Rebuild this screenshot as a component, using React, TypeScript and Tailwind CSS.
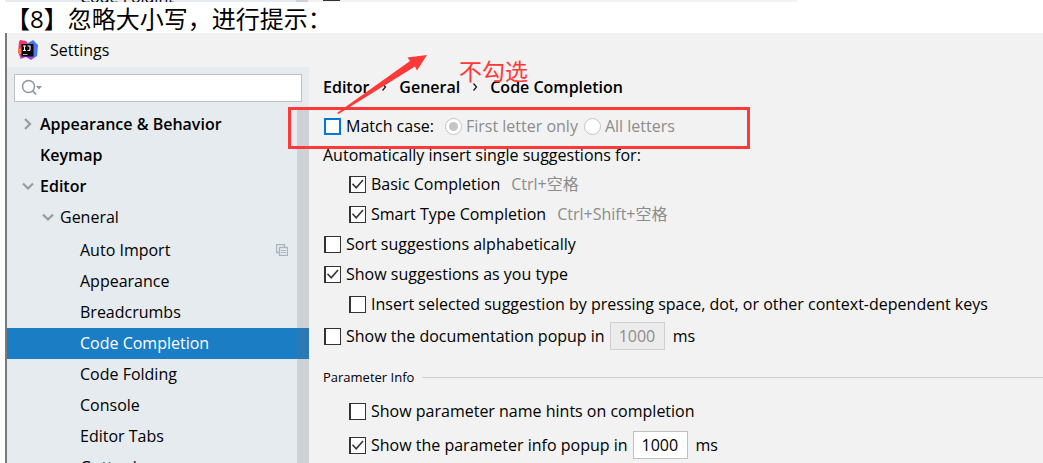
import { useState, type ReactNode } from "react";

function CheckBox({ id, checked = false, focused = false }: { id: string; checked?: boolean; focused?: boolean }) {
  const [on, setOn] = useState(checked);
  return (
    <span className="grid size-[17px] shrink-0">
      <input
        id={id}
        type="checkbox"
        checked={on}
        onChange={(e) => setOn(e.target.checked)}
        className={
          focused
            ? "col-start-1 row-start-1 size-[17px] appearance-none border-2 border-[#0078d7] bg-white"
            : "col-start-1 row-start-1 size-[17px] appearance-none border border-l-2 border-[#333333] bg-white"
        }
      />
      {on && (
        <svg viewBox="0 0 17 17" className="pointer-events-none col-start-1 row-start-1 size-[17px]" fill="none" stroke="#333" strokeWidth="1.6">
          <path d="M3.5 7.8 L7.2 11.8 L14 4" />
        </svg>
      )}
    </span>
  );
}

function Option({
  id,
  label,
  checked,
  focused,
  nested,
  children,
}: {
  id: string;
  label: string;
  checked?: boolean;
  focused?: boolean;
  nested?: boolean;
  children?: ReactNode;
}) {
  return (
    <div className={nested ? "flex h-[30px] items-center gap-[5px] pl-[25px]" : "flex h-[30px] items-center gap-[5px]"}>
      <CheckBox id={id} checked={checked} focused={focused} />
      <label htmlFor={id}>{label}</label>
      {children}
    </div>
  );
}

function Radio({ label, checked }: { label: string; checked?: boolean }) {
  return (
    <label className="flex items-center gap-1 text-[#8c8c8c]">
      <span className="grid size-[17px] place-items-center">
        <input
          type="radio"
          name="match-scope"
          disabled
          defaultChecked={checked}
          className="peer col-start-1 row-start-1 size-[17px] appearance-none rounded-full border border-[#c4c4c4] bg-white"
        />
        <span className="col-start-1 row-start-1 hidden size-[9px] rounded-full bg-[#c4c4c4] peer-checked:block" />
      </span>
      {label}
    </label>
  );
}

function Chevron({ open }: { open?: boolean }) {
  return (
    <svg viewBox="0 0 12 12" className="size-3" fill="none" stroke="#989c9f" strokeWidth="2.2">
      <path d={open ? "M1 3.5 L6 8.5 L11 3.5" : "M3 1 L8 6 L3 11"} />
    </svg>
  );
}

function CrumbArrow() {
  return (
    <svg viewBox="0 0 6 8" className="h-2 w-[6px]" fill="none" stroke="#111" strokeWidth="1.2">
      <path d="M1.5 0.5 L4.5 4 L1.5 7.5" />
    </svg>
  );
}

function CopyIcon() {
  return (
    <svg viewBox="0 0 12 12" className="size-3" fill="none" stroke="#a9b4bb">
      <path d="M3 8.500 H0.500 V0.500 H8.500 V3" strokeWidth="1.300" />
      <rect x="3.500" y="3.500" width="8" height="8" strokeWidth="1.300" />
      <path d="M5 6.500 H10 M5 8.500 H10" />
    </svg>
  );
}

function Logo() {
  return (
    <svg viewBox="0 0 20 20" className="size-5">
      <path d="M1 2 L2 0 L8 1 L11 5 L6 16 L2 17 L0 12 Z" fill="#f3356b" />
      <path d="M0 9 L5 8 L6 14 L1 14 Z" fill="#fc8a2c" />
      <path d="M10 3 L15 0 L20 5 L19 16 L16 18 L8 16 Z" fill="#4a78f2" />
      <path d="M2 19 L3 13 L12 14 L16 18 L13 20 L8 17 Z" fill="#a344dc" />
      <rect x="3.500" y="4" width="12" height="12.500" fill="#08060a" />
      <path d="M5 6 H8 M6.500 6 V10.500 M5 10.500 H8 M9.500 6 H12.500 M12 6 V9.500 Q12 10.500 10.500 10.500 H9.500" stroke="#fff" strokeWidth="1.100" fill="none" />
      <path d="M5 14.500 H9.500" stroke="#aaa" />
    </svg>
  );
}

const pages = [
  "Auto Import",
  "Appearance",
  "Breadcrumbs",
  "Code Completion",
  "Code Folding",
  "Console",
  "Editor Tabs",
  "Gutter Icons",
];

function Sidebar() {
  return (
    <nav className="flex w-[302px] shrink-0 flex-col bg-[#e6ebef]">
      <div className="p-[7px]">
        <label className="flex h-7 items-center border border-[#bfc1c3] bg-white pl-[6px]">
          <svg viewBox="0 0 22 18" className="h-[18px] w-[22px]" fill="none" stroke="#8f979d">
            <circle cx="7.500" cy="7.500" r="6" strokeWidth="1.500" />
            <path d="M11.500 11.500 L15 15.500" strokeWidth="1.800" />
            <path d="M15 7 H21 L18 10.500 Z" fill="#8f979d" stroke="none" />
          </svg>
          <input type="text" aria-label="Search settings" className="min-w-0 flex-1 outline-none" />
        </label>
      </div>
      <div className="grid flex-1">
        <ul className="col-start-1 row-start-1">
          <li className="flex h-[31px] items-center pb-[2px] pl-[15px] font-semibold">
            <Chevron />
            <span className="pl-[6px]">Appearance &amp; Behavior</span>
          </li>
          <li className="flex h-[31px] items-center pb-[2px] pl-[33px] font-semibold">Keymap</li>
          <li>
            <div className="flex h-[31px] items-center pb-[2px] pl-[15px] font-semibold">
              <Chevron open />
              <span className="pl-[6px]">Editor</span>
            </div>
            <ul>
              <li>
                <div className="flex h-[31px] items-center pb-[2px] pl-[35px]">
                  <Chevron open />
                  <span className="pl-[6px]">General</span>
                </div>
                <ul className="pt-[2px]">
                  {pages.map((page) => (
                    <li
                      key={page}
                      className={
                        page === "Code Completion"
                          ? "flex h-[31px] items-center bg-[#1b7dc4] pb-[2px] pl-[73px] text-white"
                          : "flex h-[31px] items-center justify-between pr-[21px] pb-[2px] pl-[73px]"
                      }
                    >
                      {page}
                      {page === "Auto Import" && <CopyIcon />}
                    </li>
                  ))}
                </ul>
              </li>
            </ul>
          </li>
        </ul>
        <div className="col-start-1 row-start-1 w-3 justify-self-end bg-[#6f6f78]/20" />
      </div>
    </nav>
  );
}

function Delay({ label, disabled }: { label: string; disabled?: boolean }) {
  return (
    <>
      <input
        type="text"
        aria-label={label}
        defaultValue="1000"
        disabled={disabled}
        className={
          disabled
            ? "h-7 w-[55px] border border-[#cfcfcf] bg-[#ececec] pl-2 text-[#8c8c8c]"
            : "h-7 w-[55px] border border-[#c0c0c0] bg-white pl-2"
        }
      />
      <span className="pl-[3px]">ms</span>
    </>
  );
}

function Annotation() {
  return (
    <div className="pointer-events-none">
      <div className="absolute top-[107px] left-[288px] h-[42px] w-[462px] border-3 border-[#ff3838]" />
      <svg viewBox="0 0 90 60" className="absolute top-[54px] left-[337px] h-[60px] w-[90px]" fill="#ff3838">
        <path d="M0 59 L73 7 L70.500 3.500 L90 1 L80 16.500 L78 12.500 L1.500 60 Z" />
      </svg>
      <p className="absolute top-[55px] left-[459px] text-[23px] leading-[32px] text-[#ff3838]">不勾选</p>
    </div>
  );
}

export default function App() {
  return (
    <div className="relative flex h-screen flex-col overflow-hidden bg-white font-['Open_Sans','Noto_Sans_CJK_SC',sans-serif] text-[16px] leading-[22px] text-black">
      <div className="ml-[5px] flex h-[2px] w-[792px] max-w-full shrink-0 items-end overflow-hidden bg-[#f2f2f2]">
        <div className="flex h-[20px] w-[291px] items-end bg-[#e6ebef] pl-[75px] leading-[10px]">Code Folding</div>
        <div className="h-[2px] w-3 bg-[#ced2d8]" />
        <div className="ml-[15px] h-px w-[17px] self-start bg-[#333333]" />
      </div>
      <h1 className="h-[31px] shrink-0 pl-[6px] text-[24px] leading-[33px]">【8】忽略大小写，进行提示：</h1>
      <div className="ml-[5px] flex min-h-0 flex-1 flex-col border-l-2 border-[#77797b] bg-[#f2f2f2]">
        <header className="flex h-[34px] shrink-0 items-center gap-[12px] pl-[11px]">
          <Logo />
          <span>Settings</span>
        </header>
        <div className="flex min-h-0 flex-1">
          <Sidebar />
          <main className="min-w-0 flex-1 pt-[9px] pl-[14px] whitespace-nowrap">
            <h2 className="flex items-center gap-[12px] font-semibold">
              <span>Editor</span>
              <CrumbArrow />
              <span>General</span>
              <CrumbArrow />
              <span>Code Completion</span>
            </h2>
            <div className="pt-[13px] pl-px">
              <Option id="match-case" label="Match case:" focused>
                <div className="flex gap-[6px] pl-[6px]">
                  <Radio label="First letter only" checked />
                  <Radio label="All letters" />
                </div>
              </Option>
            </div>
            <p className="py-[3px]">Automatically insert single suggestions for:</p>
            <div className="pl-px">
              <Option id="basic" label="Basic Completion" checked nested>
                <span className="pl-[6px] text-[#8c8c8c]">Ctrl+空格</span>
              </Option>
              <Option id="smart" label="Smart Type Completion" checked nested>
                <span className="pl-[6px] text-[#8c8c8c]">Ctrl+Shift+空格</span>
              </Option>
              <Option id="sort" label="Sort suggestions alphabetically" />
              <Option id="typing" label="Show suggestions as you type" checked />
              <Option id="insert" label="Insert selected suggestion by pressing space, dot, or other context-dependent keys" nested />
              <div className="py-[2px]">
                <Option id="docs" label="Show the documentation popup in">
                  <Delay label="Documentation popup delay" disabled />
                </Option>
              </div>
            </div>
            <div className="flex items-center gap-2 pt-[13px] pb-[8px] text-[13px]">
              <h3>Parameter Info</h3>
              <hr className="flex-1 border-[#cfcfcf]" />
            </div>
            <div className="flex flex-col gap-1 pl-px">
              <Option id="hints" label="Show parameter name hints on completion" nested />
              <Option id="info" label="Show the parameter info popup in" checked nested>
                <Delay label="Parameter info popup delay" />
              </Option>
            </div>
          </main>
        </div>
      </div>
      <Annotation />
    </div>
  );
}
